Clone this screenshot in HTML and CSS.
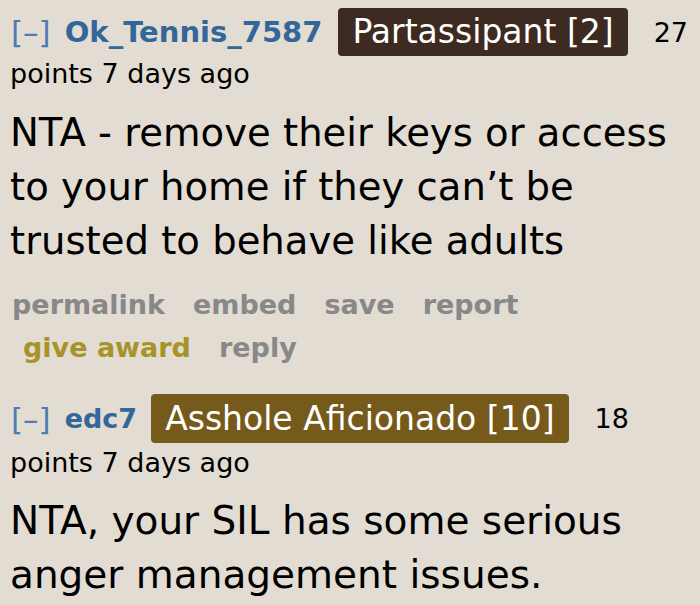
FILE: index.html
```html
<!DOCTYPE html>
<html>
<head>
<meta charset="utf-8">
<link rel="stylesheet" href="styles.css">
</head>
<body>
<div class="page">
  <div class="comment">
    <div class="head">
      <span class="expand">[–]</span>
      <span class="author">Ok_Tennis_7587</span>
      <span class="flair flair-dark">Partassipant [2]</span>
      <span class="score">27</span>
    </div>
    <div class="meta">points 7 days ago</div>
    <div class="body">NTA - remove their keys or access to your home if they can’t be trusted to behave like adults</div>
    <div class="links">
      <span class="link">permalink</span>
      <span class="link">embed</span>
      <span class="link">save</span>
      <span class="link">report</span>
    </div>
    <div class="links links-second">
      <span class="link award">give award</span>
      <span class="link">reply</span>
    </div>
  </div>
  <div class="comment comment-second">
    <div class="head">
      <span class="expand">[–]</span>
      <span class="author">edc7</span>
      <span class="flair flair-gold">Asshole Aficionado [10]</span>
      <span class="score">18</span>
    </div>
    <div class="meta">points 7 days ago</div>
    <div class="body">NTA, your SIL has some serious anger management issues.</div>
  </div>
</div>
</body>
</html>
```

FILE: styles.css
```css
html, body {
  margin: 0;
  padding: 0;
  background: #e2dcd3;
}
.page {
  width: 700px;
  height: 605px;
  overflow: hidden;
  padding: 8px 0 0 10px;
  box-sizing: border-box;
  font-family: "DejaVu Sans", Verdana, sans-serif;
  color: #000;
}
.head {
  display: flex;
  align-items: center;
  height: 48px;
}
.expand {
  color: #4f7cb0;
  font-size: 31px;
  margin-left: 1px;
  margin-right: 14px;
}
.author {
  color: #336699;
  font-weight: bold;
  font-size: 29px;
  margin-right: 16px;
}
.comment-second .author {
  font-size: 27px;
  margin-right: 14px;
}
.flair {
  color: #fff;
  font-size: 33px;
  height: 48px;
  line-height: 48px;
  padding: 0 14px;
  border-radius: 4px;
}
.comment-second .head {
  height: 49px;
}
.comment-second .flair {
  height: 49px;
  line-height: 49px;
}
.flair-dark { background: #3d2a20; }
.flair-gold { background: #765a1c; }
.score {
  font-size: 27px;
  margin-left: 26px;
}
.meta {
  font-size: 27px;
  line-height: 30px;
  margin-top: 3px;
}
.body {
  font-size: 38.6px;
  line-height: 54px;
  margin-top: 17px;
  width: 680px;
}
.links {
  display: flex;
  gap: 28px;
  font-size: 27px;
  line-height: 36px;
  font-weight: bold;
  color: #888888;
  margin-top: 19px;
  padding-left: 2px;
}
.links-second {
  margin-top: 7px;
  padding-left: 13px;
}
.award { color: #a8922a; }
.comment-second { margin-top: 28px; }
.comment-second .meta { margin-top: 5px; }
.comment-second .body {
  font-size: 39px;
  margin-top: 16px;
}
```
